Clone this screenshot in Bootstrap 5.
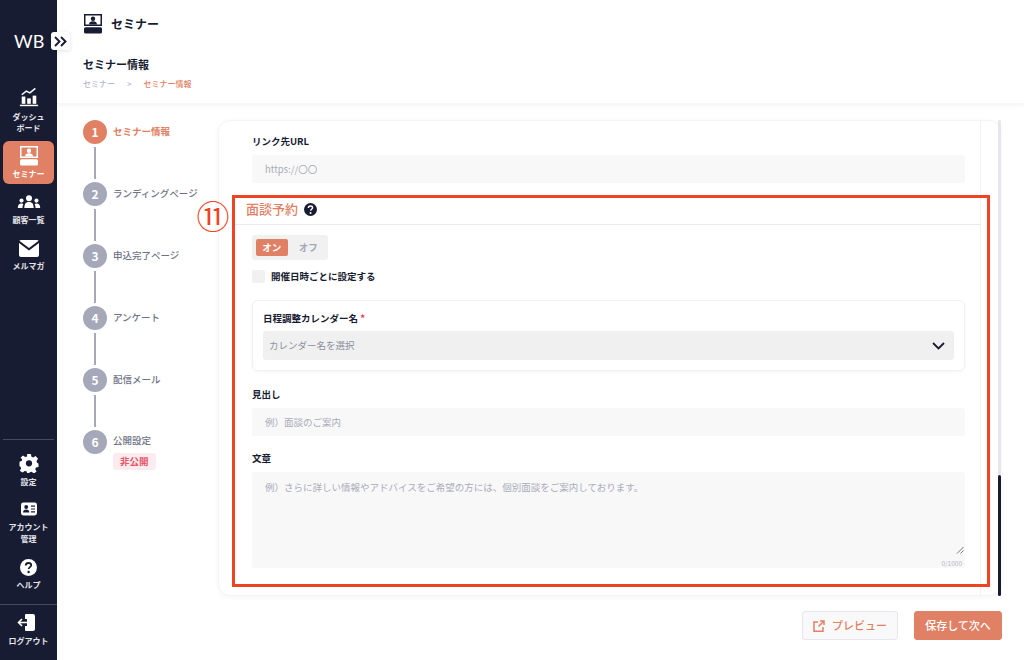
<!DOCTYPE html>
<html lang="ja"><head><meta charset="utf-8">
<link href="https://cdn.jsdelivr.net/npm/bootstrap@5.3.0/dist/css/bootstrap.min.css" rel="stylesheet">
<style>
html,body{height:660px;overflow:hidden}
body{font-family:"Noto Sans CJK JP","Noto Sans",sans-serif;color:#181c32;background:#fff;font-size:9.5px}
.app-shell{width:1024px;height:660px;position:relative}
.side{width:57px;background:#181c32;color:#fff;flex:none;height:660px}
.logo-zone{height:87px;padding-top:27px;padding-left:14px;font:400 18px/28px Lato,sans-serif;letter-spacing:0}
.toggler{position:absolute;left:51px;top:32px;width:19px;height:18px;background:#fff;border-radius:3px;box-shadow:0 1px 4px rgba(0,0,0,.12);display:flex;align-items:center;justify-content:center}
.nav-cell{display:block;text-align:center;font-size:8px;font-weight:700;line-height:11px;color:#e4e4ea;text-decoration:none}
.nav-cell svg{display:block;margin:0 auto}
.c-dash{height:54px}
.c-sem{height:43px;margin:0 3px;width:51px;background:#e08064;border-radius:6px;padding-top:5px;color:#fff}
.c-cust{padding-top:11px;height:56px}
.c-cust svg{margin-bottom:5px}
.c-mail{height:50px}
.c-mail svg{margin-bottom:3px}
.spacer-side{height:149px}
.side-rule{height:1px;background:#454a60}
.rule-inset{margin:0 3px}
.c-set{padding-top:14px;height:62px}
.c-set svg{margin-bottom:3px}
.c-acc{height:57px;line-height:12px}
.c-acc svg{margin-bottom:5px}
.c-help{height:45px}
.c-help svg{margin-bottom:3px}
.c-out{padding-top:9px}
.c-out svg{margin:0 0 4px 17px}
.top-band{height:104px;padding:14px 0 0 26px;box-shadow:0 2px 3px rgba(30,30,60,.04);border-bottom:1px solid #f6f6f8}
.page-name{font-size:12px;font-weight:700;line-height:20px}
.sec-name{font-size:11px;font-weight:700;line-height:16px;margin-top:22px}
.crumbs{font-size:8px;line-height:12px;margin-top:6px;color:#b6b9c8;font-weight:500}
.crumbs .now{color:#e08064}
.body-zone{padding:16px 22px 0 26px}
.stepper{width:136px;flex:none}
.step-row{height:62px;font-size:9.5px;font-weight:500;color:#6f7285}
.dot{width:24px;height:24px;border-radius:50%;background:#a5a8b9;color:#fff;font-weight:700;font-size:12px;display:flex;align-items:center;justify-content:center;flex:none;position:relative;z-index:1}
.dot-on{background:#e08064}
.step-on{color:#e08064;font-weight:700}
.step-text{margin-left:6px;line-height:23px;white-space:nowrap}
.link-bar{width:2px;height:32px;background:#a5a8b9;margin:3px 0 0 11px}
.tag-private{display:inline-block;background:#fdebef;color:#e5576a;font-weight:700;font-size:9.5px;line-height:17px;padding:0 7px;border-radius:3px;margin-top:0}
.sheet{width:783px;height:476px;border:1px solid #f4f4f7;border-radius:12px;box-shadow:0 1px 5px rgba(30,30,60,.05);margin-left:-1px;overflow:hidden;position:relative}
.sheet-inner{padding:13px 0 0 33px;width:762px;height:100%;border-right:1px solid #f2f2f6}
.fld-label{font-size:9.5px;font-weight:700;line-height:14px;margin-bottom:7px}
.fld-input{background:#f8f8f8;border-radius:3px;width:713px;height:28px;line-height:28px;padding-left:13px;font-size:9.5px;color:#a9abb9}
.head-row{margin:12px 0 0 -20px;width:749px;height:30px;border-bottom:1px solid #e9e9f1;padding-left:14px;display:flex;align-items:center;gap:6px;padding-top:2px;padding-bottom:3px}
.head-row .ttl{font-size:13px;color:#e08064;font-weight:500;line-height:18px}
.toggle-box{width:76px;height:25px;background:#f1f1f1;border-radius:3px;margin-top:10px;padding:4px;display:flex;font-size:9.5px;font-weight:700;color:#a5a8b9}
.toggle-box span{width:32px;height:17px;line-height:17px;text-align:center;border-radius:2px}
.toggle-box span+span{margin-left:5px}
.toggle-box .on{background:#e08064;color:#fff}
.chk-row{margin-top:9px;height:14px;display:flex;align-items:center;gap:6px;font-size:9.5px;font-weight:700}
.chk-box{width:13px;height:13px;background:#f1f1f1;border-radius:2px}
.pick-panel{width:713px;height:71px;margin-top:17px;border:1px solid #f1f1f4;border-radius:6px;box-shadow:0 1px 3px rgba(30,30,60,.05);padding:10px 10px 0}
.pick-panel .fld-label{margin-bottom:6px}
.req{color:#e5404f}
.pick{background:#f0f0f0;border-radius:3px;height:29px;display:flex;justify-content:space-between;align-items:center;padding:0 9px 0 6px;font-size:9.5px;color:#8c8f9f}
.mt-a{margin-top:16px}
.mt-b{margin-top:15px}
.area{background:#f8f8f8;width:713px;height:96px;border-radius:3px;padding:8px 13px;font-size:9.5px;color:#a9abb9;position:relative;line-height:14px}
.count{position:absolute;right:3px;bottom:0;font-size:6.5px;color:#b4b6c4;line-height:10px}
.grip{position:absolute;right:1px;bottom:14px}
.scroll-track{position:absolute;left:998px;top:120px;width:3px;height:476px;background:#e6e6ef;border-radius:2px}
.scroll-thumb{position:absolute;left:0;bottom:0;width:3px;height:121px;background:#181c32;border-radius:2px}
.foot-row{padding:15px 0 0;gap:16px;justify-content:flex-end;display:flex;margin-right:0}
.btn-prev,.btn-next{height:29px;font-size:11px;font-weight:500;border-radius:3px;display:flex;align-items:center;justify-content:center;padding:0}
.btn-prev{width:96px;background:#f9f9fa;border:1px solid #e6e6ec;color:#e08064;gap:7px}
.btn-next{width:88px;background:#e08064;border:1px solid #e08064;color:#fff}
.note-box{position:absolute;left:232px;top:195px;width:758px;height:392px;border:3px solid #ee4423;pointer-events:none}
.note-num{position:absolute;left:193px;top:191px;width:40px;height:48px;font-size:33px;line-height:48px;color:#ee4423;text-align:center}
</style></head>
<body>
<div class="app-shell d-flex">
 <aside class="side d-flex flex-column">
  <div class="logo-zone">WB</div>
  <a class="nav-cell c-dash"><svg width="20" height="20" viewBox="0 0 22 21" fill="#fff"><rect x="3" y="10" width="4" height="8"/><rect x="9" y="12" width="4" height="6"/><rect x="15" y="9" width="4" height="9"/><rect x="1" y="19" width="20" height="1.6"/><path d="M3 8l5-4 4 2 6-5" fill="none" stroke="#fff" stroke-width="1.6"/></svg><span class="d-block" style="margin-top:4px">ダッシュ<br>ボード</span></a>
  <a class="nav-cell c-sem"><svg width="20" height="20" viewBox="0 0 20 20" fill="#fff"><path d="M1 0h18v12H1z M2.500 1.500v9h15v-9z" fill-rule="evenodd"/><circle cx="10" cy="4.800" r="2.200"/><path d="M6 10.500c0-2.500 1.800-3.300 4-3.300s4 .8 4 3.300z"/><rect x="1" y="13.300" width="18" height="6.200" rx="1.500"/></svg><span class="d-block" style="margin-top:2px">セミナー</span></a>
  <a class="nav-cell c-cust"><svg width="24" height="14" viewBox="0 0 24 15" fill="#fff"><circle cx="12" cy="3.500" r="3.200"/><path d="M7 14c0-5 2-6.500 5-6.500s5 1.500 5 6.500z"/><circle cx="4" cy="6" r="2.200"/><path d="M0 14c0-3.500 1.500-5 4-5 1 0 1.600.3 2 .6-.6 1-1 2.400-1 4.400z"/><circle cx="20" cy="6" r="2.200"/><path d="M24 14c0-3.500-1.500-5-4-5-1 0-1.600.3-2 .6.600 1 1 2.400 1 4.400z"/></svg>顧客一覧</a>
  <a class="nav-cell c-mail"><svg width="20" height="17" viewBox="0 0 20 17" fill="#fff"><path d="M2 0h16a2 2 0 0 1 1.600.8L10 8 .4.800A2 2 0 0 1 2 0z"/><path d="M0 3l10 7.500L20 3v12a2 2 0 0 1-2 2H2a2 2 0 0 1-2-2z"/></svg>メルマガ</a>
  <div class="spacer-side"></div>
  <div class="side-rule rule-inset"></div>
  <a class="nav-cell c-set"><svg width="20" height="19" viewBox="0 0 20 20" fill="#fff"><path fill-rule="evenodd" d="M8 0h4l.6 2.800 1.800.8L16.900 2 19.500 5l-1.600 2.300.5 1.700L20 10.200v3.600l-2.700.5-.8 1.800 1.500 2.400-2.900 2-2.200-1.700-1.900.4L10 20H8l-.6-1.800-1.900-.4-2.300 1.700L.3 17.500l1.500-2.400-.8-1.800L0 12.800V8.200l2.300-.9.500-1.700L1.100 4 3.700 1.500l2.300 1.700L8 2.600z M10 6.500a3.300 3.300 0 1 0 0 6.600 3.300 3.300 0 0 0 0-6.600z"/></svg>設定</a>
  <a class="nav-cell c-acc"><svg width="16" height="14" viewBox="0 0 20 17"><rect width="20" height="16" y=".5" rx="3" fill="#fff"/><circle cx="6.500" cy="6" r="2.400" fill="#181c32"/><path d="M2.500 13c0-2.800 1.800-4 4-4s4 1.200 4 4z" fill="#181c32"/><path d="M12.500 5h5M12.500 8.500h5M12.500 12h5" stroke="#181c32" stroke-width="1.500"/></svg>アカウント<br>管理</a>
  <a class="nav-cell c-help"><svg width="17" height="17" viewBox="0 0 17 17"><circle cx="8.500" cy="8.500" r="8.500" fill="#fff"/><path d="M5.800 6.500c0-1.600 1.200-2.500 2.700-2.500s2.700.9 2.700 2.300c0 1.800-2.500 1.900-2.500 3.700" fill="none" stroke="#181c32" stroke-width="1.800"/><circle cx="8.600" cy="13" r="1.200" fill="#181c32"/></svg>ヘルプ</a>
  <div class="side-rule"></div>
  <a class="nav-cell c-out"><svg width="18" height="17" viewBox="0 0 18 17" fill="#fff"><path d="M9 0h7a2 2 0 0 1 2 2v13a2 2 0 0 1-2 2H9a1 1 0 0 1-1-1v-4h2v-7H8V1a1 1 0 0 1 1-1z"/><path d="M12 8.500H2M5 5 1.500 8.500 5 12" fill="none" stroke="#fff" stroke-width="1.600"/></svg>ログアウト</a>
 </aside>
 <span class="toggler"><svg width="13" height="11" viewBox="0 0 13 11" fill="none" stroke="#181c32" stroke-width="1.900"><path d="M1 1l4.500 4.500L1 10M7 1l4.500 4.500L7 10"/></svg></span>
 <main class="flex-grow-1">
  <header class="top-band">
   <div class="d-flex align-items-center" style="gap:8px"><svg width="20" height="20" viewBox="0 0 20 20" fill="#181c32"><path d="M1 0h18v12H1z M2.500 1.500v9h15v-9z" fill-rule="evenodd"/><circle cx="10" cy="4.800" r="2.200"/><path d="M6 10.500c0-2.500 1.800-3.300 4-3.300s4 .8 4 3.300z"/><rect x="1" y="13.300" width="18" height="6.200" rx="1.500"/></svg><span class="page-name">セミナー</span></div>
   <div class="sec-name">セミナー情報</div>
   <div class="crumbs">セミナー<span class="mx-2 px-1">&gt;</span><span class="now">セミナー情報</span></div>
  </header>
  <div class="body-zone">
   <div class="d-flex">
    <div class="stepper">
     <div class="step-row step-on"><div class="d-flex"><span class="dot dot-on">1</span><span class="step-text">セミナー情報</span></div><div class="link-bar"></div></div>
     <div class="step-row"><div class="d-flex"><span class="dot">2</span><span class="step-text">ランディングページ</span></div><div class="link-bar"></div></div>
     <div class="step-row"><div class="d-flex"><span class="dot">3</span><span class="step-text">申込完了ページ</span></div><div class="link-bar"></div></div>
     <div class="step-row"><div class="d-flex"><span class="dot">4</span><span class="step-text">アンケート</span></div><div class="link-bar"></div></div>
     <div class="step-row"><div class="d-flex"><span class="dot">5</span><span class="step-text">配信メール</span></div><div class="link-bar"></div></div>
     <div class="step-row"><div class="d-flex"><span class="dot">6</span><div class="step-text" style="line-height:21px"><div>公開設定</div><span class="tag-private">非公開</span></div></div></div>
    </div>
    <section class="sheet">
     <div class="sheet-inner">
      <div class="fld-label">リンク先URL</div>
      <div class="fld-input">https://〇〇</div>
      <div class="head-row"><span class="ttl">面談予約</span><svg width="13" height="13" viewBox="0 0 17 17"><circle cx="8.500" cy="8.500" r="8.500" fill="#181c32"/><path d="M5.800 6.500c0-1.600 1.200-2.500 2.700-2.500s2.700.9 2.700 2.300c0 1.800-2.500 1.900-2.500 3.700" fill="none" stroke="#fff" stroke-width="1.900"/><circle cx="8.600" cy="13" r="1.300" fill="#fff"/></svg></div>
      <div class="toggle-box"><span class="on">オン</span><span>オフ</span></div>
      <div class="chk-row"><span class="chk-box"></span>開催日時ごとに設定する</div>
      <div class="pick-panel">
       <div class="fld-label">日程調整カレンダー名 <span class="req">*</span></div>
       <div class="pick"><span>カレンダー名を選択</span><svg width="13" height="8" viewBox="0 0 13 8" fill="none" stroke="#181c32" stroke-width="1.800"><path d="M1 1l5.500 5.500L12 1"/></svg></div>
      </div>
      <div class="fld-label mt-a">見出し</div>
      <div class="fld-input">例）面談のご案内</div>
      <div class="fld-label mt-b">文章</div>
      <div class="area">例）さらに詳しい情報やアドバイスをご希望の方には、個別面談をご案内しております。
       <svg class="grip" width="8" height="8" viewBox="0 0 8 8" stroke="#777" fill="none"><path d="M1 7.500 7.500 1M4.500 7.500l3-3"/></svg>
       <span class="count">0/1000</span>
      </div>
     </div>
    </section>
   </div>
   <div class="foot-row"><button class="btn-prev" type="button"><svg width="12" height="12" viewBox="0 0 12 12" fill="none" stroke="#e08064" stroke-width="1.500"><path d="M5 2H1v9.200h9V7M7 1h4v4M11 1 5.500 6.500"/></svg>プレビュー</button><button class="btn-next" type="button">保存して次へ</button></div>
  </div>
 </main>
 <div class="scroll-track"><div class="scroll-thumb"></div></div>
 <div class="note-box"></div>
 <div class="note-num">⑪</div>
</div>
<script src="https://cdn.jsdelivr.net/npm/bootstrap@5.3.0/dist/js/bootstrap.bundle.min.js"></script>
</body></html>
